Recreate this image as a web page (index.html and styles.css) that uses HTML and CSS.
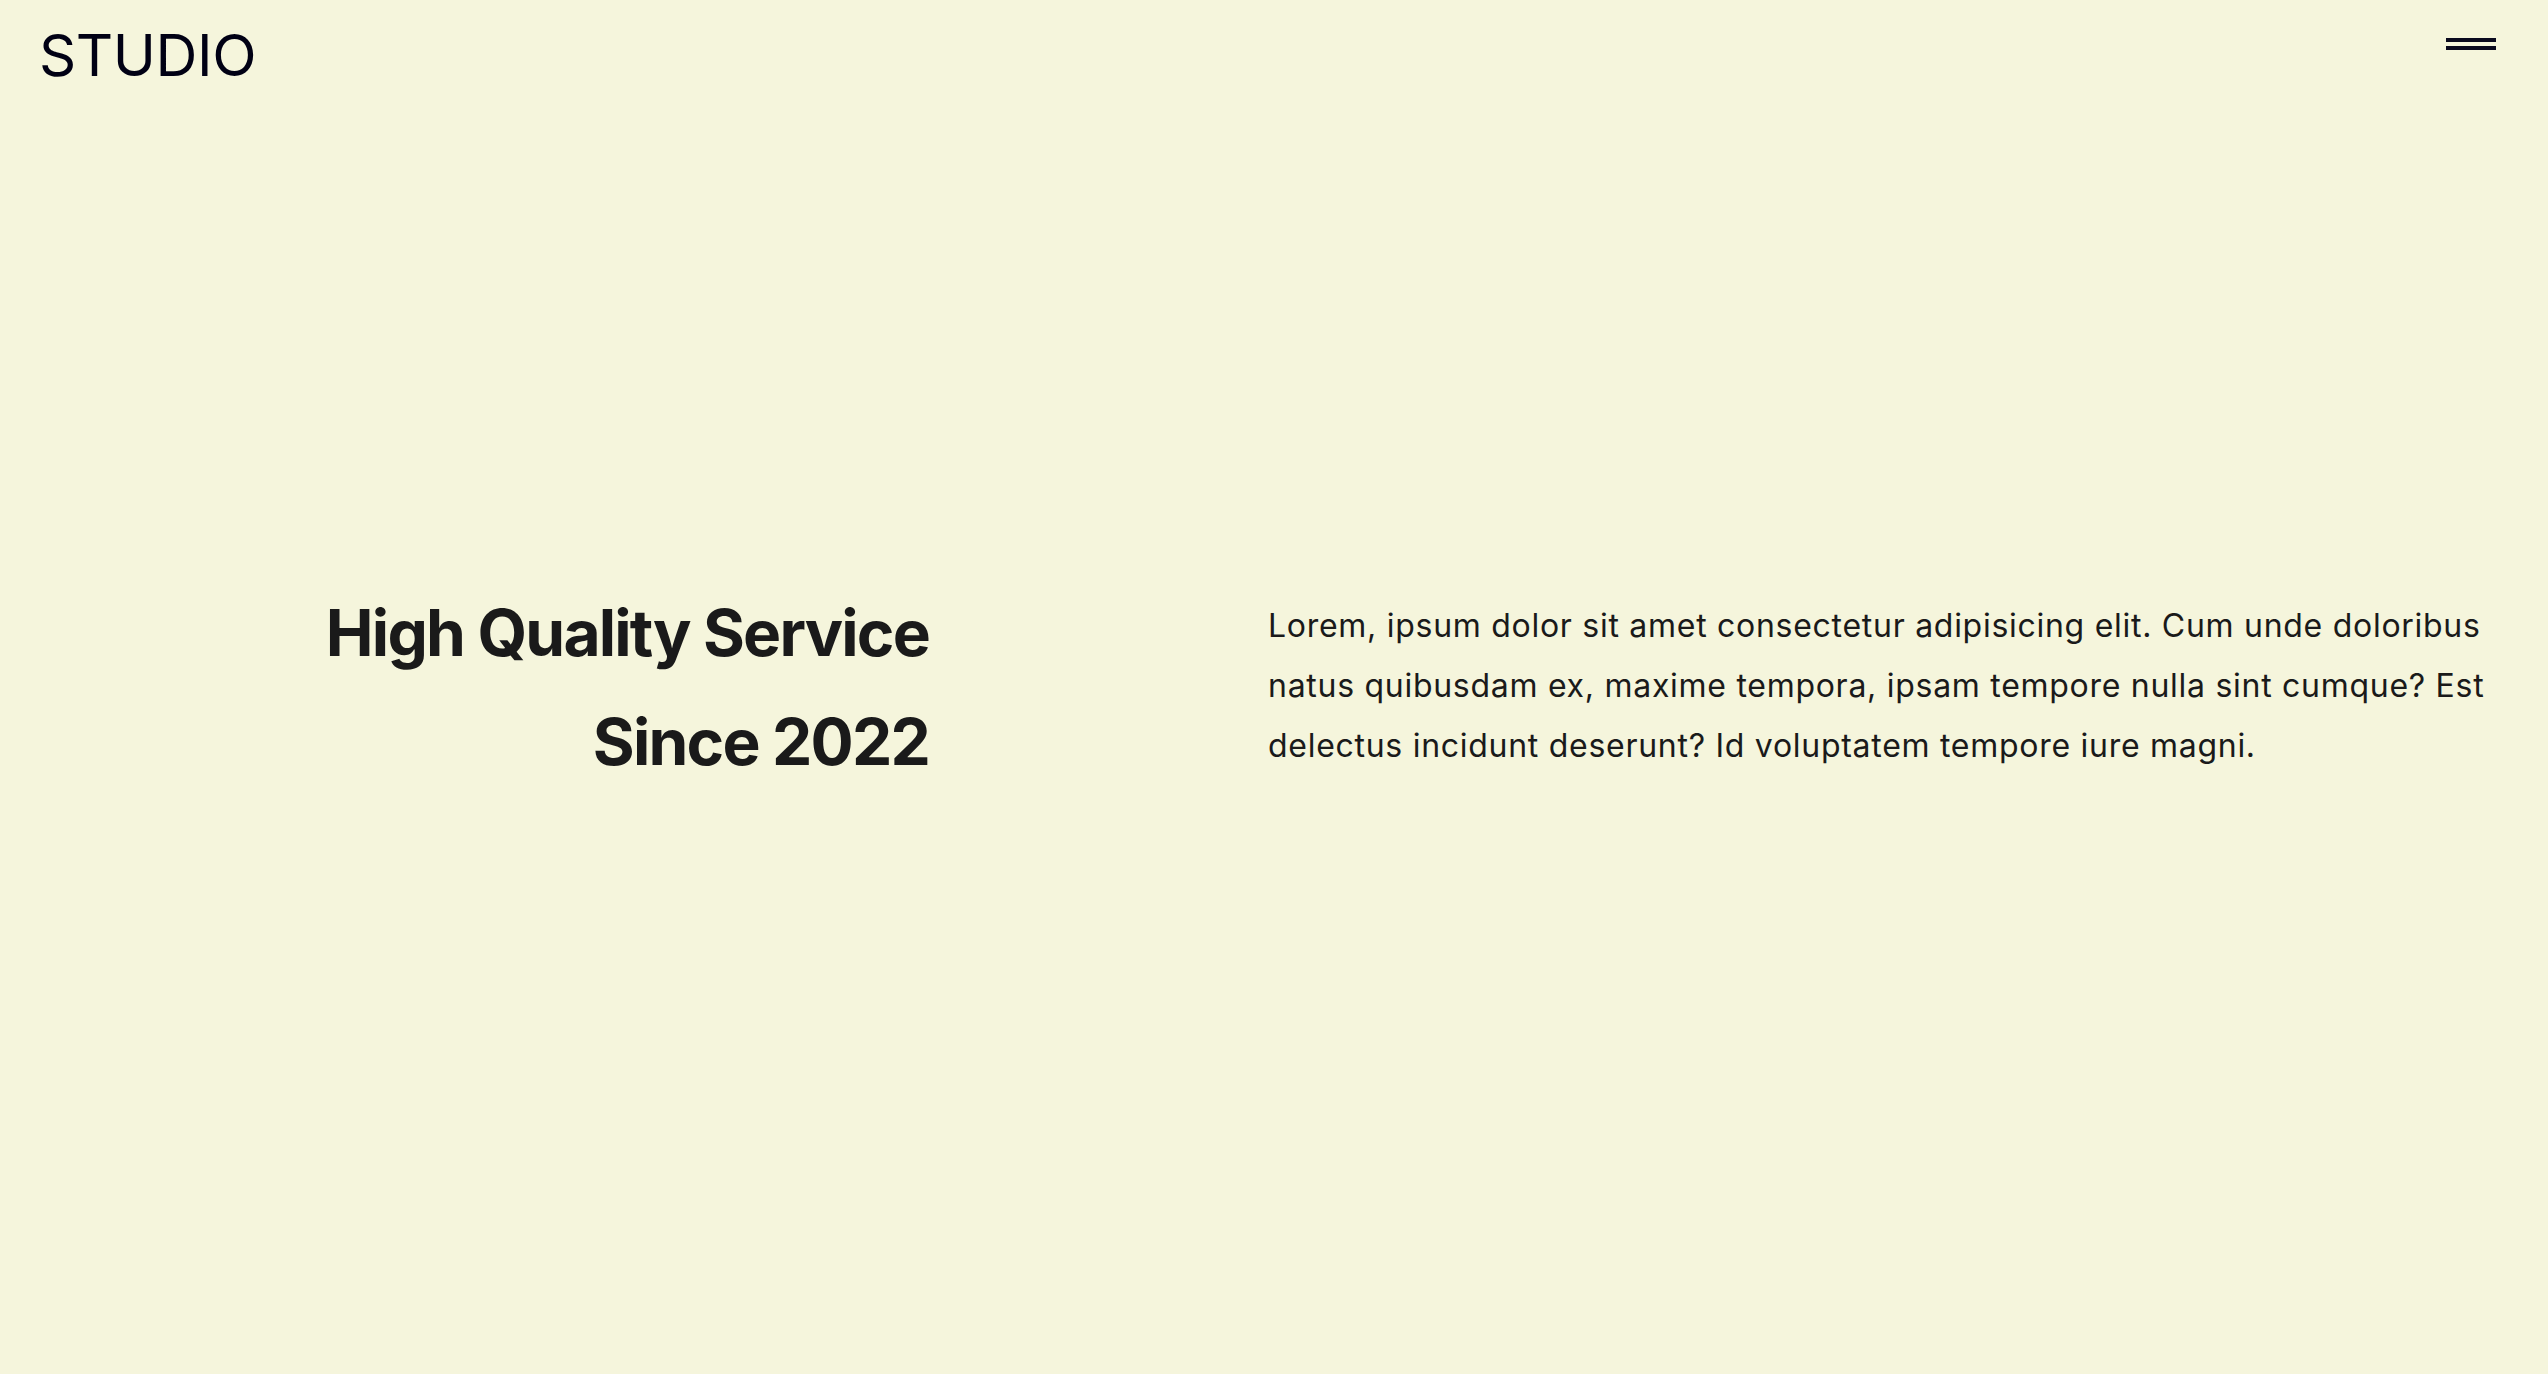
FILE: index.html
```html
<!DOCTYPE html>
<html lang="en">
<head>
<meta charset="utf-8">
<title>Studio</title>
<link rel="stylesheet" href="styles.css">
</head>
<body>
<header class="topbar">
  <div class="logo">STUDIO</div>
  <button class="menu" aria-label="Menu"><span class="bar"></span><span class="bar"></span></button>
</header>
<main class="hero">
  <div class="hero-left">
    <h1 class="title">High Quality Service<br>Since 2022</h1>
  </div>
  <div class="hero-right">
    <p class="lead">Lorem, ipsum dolor sit amet consectetur adipisicing elit. Cum unde doloribus natus quibusdam ex, maxime tempora, ipsam tempore nulla sint cumque? Est delectus incidunt deserunt? Id voluptatem tempore iure magni.</p>
  </div>
</main>
</body>
</html>
```

FILE: styles.css
```css
html, body {
  margin: 0;
  padding: 0;
  background: #f5f5dc;
}
body {
  font-family: Inter, "Noto Sans", sans-serif;
  color: #1a1a1a;
}
.topbar {
  position: fixed;
  top: 0;
  left: 0;
  right: 0;
  display: flex;
  justify-content: space-between;
  align-items: flex-start;
  padding: 25px 52px 0 39px;
}
.logo {
  font-size: 58px;
  font-weight: 400;
  color: #000014;
  line-height: 60px;
  letter-spacing: -0.4px;
}
.menu {
  display: flex;
  flex-direction: column;
  gap: 4px;
  margin-top: 13px;
  background: none;
  border: 0;
  padding: 0;
  cursor: pointer;
}
.bar {
  display: block;
  width: 50px;
  height: 4px;
  background: #0a0a1e;
}
.hero {
  height: 100vh;
  display: grid;
  grid-template-columns: 1268px 1fr;
  align-items: center;
}
.hero-left {
  padding-right: 339px;
  text-align: right;
}
.title {
  margin: 0;
  font-size: 64px;
  font-weight: 700;
  line-height: 109px;
  letter-spacing: -1.8px;
  color: #1a1a1a;
}
.hero-right {
  padding-right: 40px;
  padding-bottom: 3px;
}
.lead {
  margin: 0;
  font-size: 32px;
  line-height: 60px;
  letter-spacing: 0.72px;
  color: #1a1a1a;
}
```
